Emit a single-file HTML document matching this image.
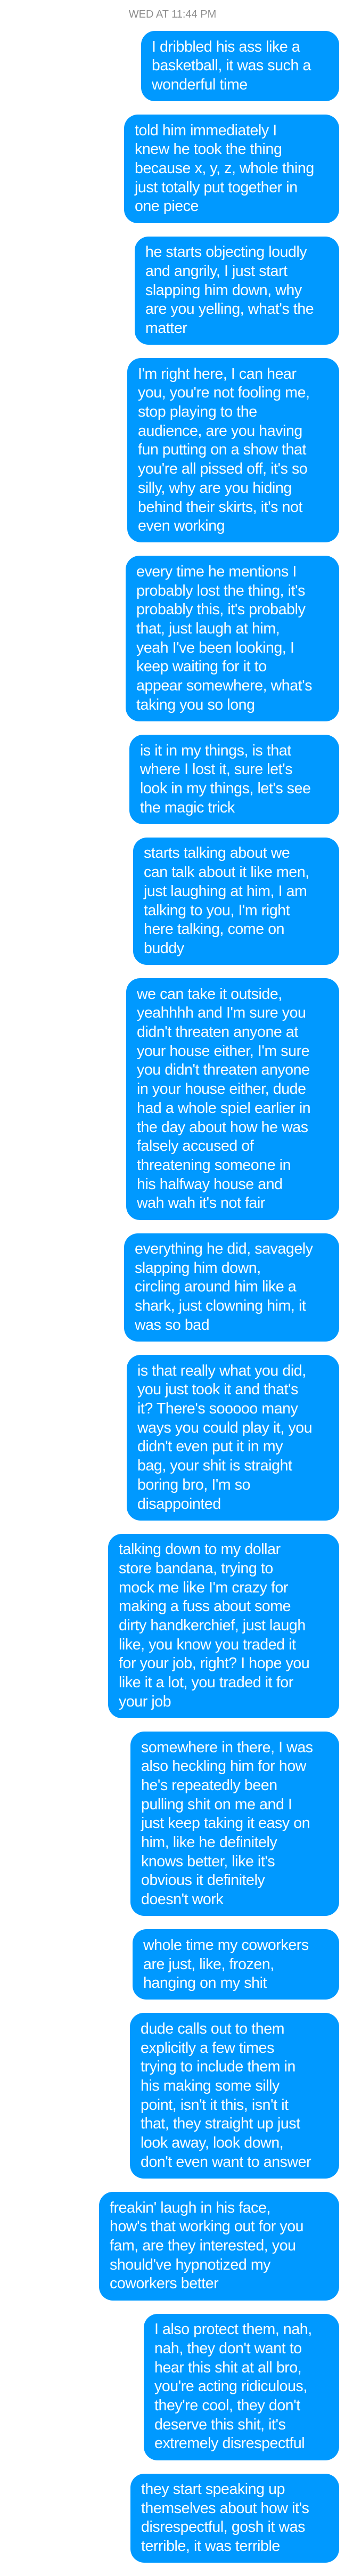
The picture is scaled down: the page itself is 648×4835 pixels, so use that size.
<!DOCTYPE html>
<html><head><meta charset="utf-8"><style>
body{margin:0;background:#fff;width:648px;height:4804px;overflow:hidden;font-family:"Liberation Sans",Arial,sans-serif;}
.ts{position:absolute;top:15px;left:0;width:648px;text-align:center;color:#8e8e8e;font-size:20px;line-height:24px;}
.wrap{position:absolute;top:58px;left:0;width:648px;}
.b{background:#0099ff;color:#fff;border-radius:26px;padding:12.5px 10px 12.5px 20px;margin:0 11px 25px 0;font-size:28.5px;line-height:35.7px;white-space:nowrap;box-sizing:border-box;letter-spacing:-0.4px;overflow:hidden;}
</style></head><body>
<div class="ts">WED AT 11:44 PM</div>
<div class="wrap">
<div class="b" style="margin-left:265px">I dribbled his ass like a<br>basketball, it was such a<br>wonderful time</div>
<div class="b" style="margin-left:233px">told him immediately I<br>knew he took the thing<br>because x, y, z, whole thing<br>just totally put together in<br>one piece</div>
<div class="b" style="margin-left:253px">he starts objecting loudly<br>and angrily, I just start<br>slapping him down, why<br>are you yelling, what's the<br>matter</div>
<div class="b" style="margin-left:239px">I'm right here, I can hear<br>you, you're not fooling me,<br>stop playing to the<br>audience, are you having<br>fun putting on a show that<br>you're all pissed off, it's so<br>silly, why are you hiding<br>behind their skirts, it's not<br>even working</div>
<div class="b" style="margin-left:236px">every time he mentions I<br>probably lost the thing, it's<br>probably this, it's probably<br>that, just laugh at him,<br>yeah I've been looking, I<br>keep waiting for it to<br>appear somewhere, what's<br>taking you so long</div>
<div class="b" style="margin-left:243px">is it in my things, is that<br>where I lost it, sure let's<br>look in my things, let's see<br>the magic trick</div>
<div class="b" style="margin-left:250px">starts talking about we<br>can talk about it like men,<br>just laughing at him, I am<br>talking to you, I'm right<br>here talking, come on<br>buddy</div>
<div class="b" style="margin-left:237px">we can take it outside,<br>yeahhhh and I'm sure you<br>didn't threaten anyone at<br>your house either, I'm sure<br>you didn't threaten anyone<br>in your house either, dude<br>had a whole spiel earlier in<br>the day about how he was<br>falsely accused of<br>threatening someone in<br>his halfway house and<br>wah wah it's not fair</div>
<div class="b" style="margin-left:233px">everything he did, savagely<br>slapping him down,<br>circling around him like a<br>shark, just clowning him, it<br>was so bad</div>
<div class="b" style="margin-left:238px">is that really what you did,<br>you just took it and that's<br>it? There's sooooo many<br>ways you could play it, you<br>didn't even put it in my<br>bag, your shit is straight<br>boring bro, I'm so<br>disappointed</div>
<div class="b" style="margin-left:203px">talking down to my dollar<br>store bandana, trying to<br>mock me like I'm crazy for<br>making a fuss about some<br>dirty handkerchief, just laugh<br>like, you know you traded it<br>for your job, right? I hope you<br>like it a lot, you traded it for<br>your job</div>
<div class="b" style="margin-left:245px">somewhere in there, I was<br>also heckling him for how<br>he's repeatedly been<br>pulling shit on me and I<br>just keep taking it easy on<br>him, like he definitely<br>knows better, like it's<br>obvious it definitely<br>doesn't work</div>
<div class="b" style="margin-left:249px">whole time my coworkers<br>are just, like, frozen,<br>hanging on my shit</div>
<div class="b" style="margin-left:244px">dude calls out to them<br>explicitly a few times<br>trying to include them in<br>his making some silly<br>point, isn't it this, isn't it<br>that, they straight up just<br>look away, look down,<br>don't even want to answer</div>
<div class="b" style="margin-left:186px">freakin' laugh in his face,<br>how's that working out for you<br>fam, are they interested, you<br>should've hypnotized my<br>coworkers better</div>
<div class="b" style="margin-left:270px">I also protect them, nah,<br>nah, they don't want to<br>hear this shit at all bro,<br>you're acting ridiculous,<br>they're cool, they don't<br>deserve this shit, it's<br>extremely disrespectful</div>
<div class="b" style="margin-left:245px">they start speaking up<br>themselves about how it's<br>disrespectful, gosh it was<br>terrible, it was terrible</div>
</div>
</body></html>
